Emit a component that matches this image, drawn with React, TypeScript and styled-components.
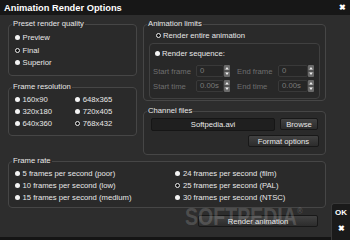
import React from 'react'
import styled, { createGlobalStyle } from 'styled-components'

const GlobalStyle = createGlobalStyle`
  html, body {
    margin: 0;
    padding: 0;
    background: #2d2d2d;
  }
  body {
    font-family: 'Liberation Sans', Arial, sans-serif;
  }
`

const Dialog = styled.div`
  background: #2d2d2d;
  color: #e8e8e8;
  display: flex;
  flex-direction: column;
  font-size: 7.7px;
  height: 240px;
  overflow: hidden;
  position: relative;
  width: 350px;
`

const TitleBar = styled.div`
  align-items: center;
  background: #171717;
  display: flex;
  flex: none;
  height: 15px;
  justify-content: space-between;
  padding: 0 4px;
`

const Title = styled.span`
  color: #fff;
  font-size: 9.3px;
  font-weight: bold;
`

const Close = styled.span`
  color: #fff;
  font-size: 8px;
  font-weight: bold;
`

const Main = styled.div`
  display: flex;
  flex: 1;
  min-height: 0;
`

const Content = styled.div`
  border-bottom: 3px solid #141414;
  display: flex;
  flex: 1;
  flex-direction: column;
  padding: 4px 5px 0 8px;
`

const TopRow = styled.div`
  display: flex;
  gap: 6px;
  height: 137px;
`

const Column = styled.div<{ $width: number; $gap: number }>`
  display: flex;
  flex-direction: column;
  gap: ${(p) => p.$gap}px;
  width: ${(p) => p.$width}px;
`

const Group = styled.fieldset<{ $height: number }>`
  background: #2a2a2a;
  border: 1px solid #464646;
  border-radius: 4px;
  box-sizing: border-box;
  height: ${(p) => p.$height}px;
  margin: 0;
  min-width: 0;
  padding: 0;
`

const Legend = styled.legend`
  color: #e8e8e8;
  line-height: 10px;
  margin-left: 3px;
  padding: 0 1px;
`

const GroupBody = styled.div<{ $pad: string }>`
  padding: ${(p) => p.$pad};
`

const RadioGrid = styled.div<{ $col: number; $row: number }>`
  display: grid;
  grid-auto-rows: ${(p) => p.$row}px;
  grid-template-columns: ${(p) => p.$col}px 1fr;
`

const RadioList = styled.div<{ $row: number }>`
  display: grid;
  grid-auto-rows: ${(p) => p.$row}px;
`

const Radio = styled.div<{ $indent?: number }>`
  align-items: center;
  display: flex;
  gap: 2.5px;
  padding-left: ${(p) => p.$indent ?? 0}px;
  white-space: nowrap;
`

const Dot = styled.span<{ $checked?: boolean }>`
  background: ${(p) => (p.$checked ? '#111' : '#f4f4f4')};
  border: ${(p) => (p.$checked ? '1.3px solid #eeeeee' : 'none')};
  border-radius: 50%;
  box-sizing: border-box;
  flex: none;
  height: 5px;
  width: 5px;
`

const SubPanel = styled.div`
  background: #282828;
  border: 1px solid #404040;
  border-radius: 4px;
  box-sizing: border-box;
  height: 56px;
  margin-top: 3px;
  padding: 4px 0 0 3px;
`

const SpinRows = styled.div`
  display: flex;
  flex-direction: column;
  gap: 3px;
  margin-top: 7px;
`

const SpinRow = styled.div`
  align-items: center;
  display: flex;
  height: 12px;
`

const SpinLabel = styled.span<{ $width: number }>`
  color: #6f6f6f;
  flex: none;
  width: ${(p) => p.$width}px;
`

const SpinInput = styled.div<{ $width: number }>`
  background: #262626;
  border: 1px solid #393939;
  border-radius: 2px;
  box-sizing: border-box;
  color: #7a7a7a;
  height: 12px;
  line-height: 10px;
  padding-left: 3px;
  width: ${(p) => p.$width}px;
`

const SpinGap = styled.span`
  flex: none;
  width: 7px;
`

const FileRow = styled.div`
  display: flex;
  gap: 5px;
`

const FileInput = styled.div`
  background: #1f1f1f;
  border: 1px solid #161616;
  border-radius: 2px;
  box-sizing: border-box;
  color: #ececec;
  height: 13px;
  line-height: 11px;
  text-align: center;
  width: 124px;
`

const Button = styled.div<{ $width: number }>`
  align-items: center;
  background: linear-gradient(#424242, #2c2c2c);
  border: 1px solid #181818;
  border-radius: 2px;
  box-sizing: border-box;
  color: #e8e8e8;
  display: flex;
  height: 12px;
  justify-content: center;
  width: ${(p) => p.$width}px;
`

const RightAligned = styled.div<{ $top: number; $right: number }>`
  display: flex;
  justify-content: flex-end;
  margin-top: ${(p) => p.$top}px;
  padding-right: ${(p) => p.$right}px;
`

const Side = styled.div`
  display: flex;
  flex: none;
  flex-direction: column;
  justify-content: flex-end;
  width: 19px;
`

const Strip = styled.div`
  align-items: center;
  background: #1a1a1a;
  border-left: 1px solid #383838;
  border-radius: 3px 0 0 0;
  border-top: 1px solid #383838;
  box-sizing: border-box;
  display: flex;
  flex-direction: column;
  gap: 6px;
  height: 37px;
  padding-top: 4px;
`

const StripItem = styled.span`
  color: #fff;
  font-size: 8px;
  font-weight: bold;
  line-height: 10px;
`

const Watermark = styled.div`
  color: rgba(255, 255, 255, 0.17);
  font-family: 'Liberation Sans', Arial, sans-serif;
  font-size: 23px;
  font-weight: bold;
  left: 185px;
  line-height: 23px;
  pointer-events: none;
  position: absolute;
  top: 200px;
  transform: scaleX(0.85);
  transform-origin: left top;
  white-space: nowrap;

  sup {
    font-size: 9px;
    vertical-align: 11px;
  }
`

const Spinner = () => (
  <svg width="6" height="12" viewBox="0 0 6 12" style={{ flex: 'none' }}>
    <rect x="0" y="0" width="6" height="12" rx="1" fill="#6a6a6a" />
    <line x1="0" y1="6" x2="6" y2="6" stroke="#3a3a3a" strokeWidth="1" />
    <path d="M1.2 4.4 L3 2 L4.8 4.4 Z" fill="#f0f0f0" />
    <path d="M1.2 7.6 L3 10 L4.8 7.6 Z" fill="#f0f0f0" />
  </svg>
)

const Spin = ({
  label,
  labelWidth,
  value,
  width,
}: {
  label: string
  labelWidth: number
  value: string
  width: number
}) => (
  <>
    <SpinLabel $width={labelWidth}>{label}</SpinLabel>
    <SpinInput $width={width}>{value}</SpinInput>
    <Spinner />
  </>
)

const Option = ({ label, checked, indent }: { label: string; checked?: boolean; indent?: number }) => (
  <Radio $indent={indent}>
    <Dot $checked={checked} />
    {label}
  </Radio>
)

const App = () => {
  return (
    <Dialog>
      <GlobalStyle />
      <TitleBar>
        <Title>Animation Render Options</Title>
        <Close>✖</Close>
      </TitleBar>
      <Main>
        <Content>
          <TopRow>
            <Column $width={129} $gap={6}>
              <Group $height={57}>
                <Legend>Preset render quality</Legend>
                <GroupBody $pad="2px 0 0 6px">
                  <RadioList $row={12.7}>
                    <Option label="Preview" />
                    <Option label="Final" checked />
                    <Option label="Superior" />
                  </RadioList>
                </GroupBody>
              </Group>
              <Group $height={54}>
                <Legend>Frame resolution</Legend>
                <GroupBody $pad="1px 0 0 6px">
                  <RadioGrid $col={60.3} $row={12.2}>
                    <Option label="160x90" />
                    <Option label="648x365" />
                    <Option label="320x180" />
                    <Option label="720x405" />
                    <Option label="640x360" />
                    <Option label="768x432" checked />
                  </RadioGrid>
                </GroupBody>
              </Group>
            </Column>
            <Column $width={183} $gap={5}>
              <Group $height={82}>
                <Legend>Animation limits</Legend>
                <GroupBody $pad="1px 5px 0 5px">
                  <RadioList $row={10}>
                    <Option label="Render entire animation" checked indent={6.5} />
                  </RadioList>
                  <SubPanel>
                    <RadioList $row={10}>
                      <Option label="Render sequence:" indent={1.5} />
                    </RadioList>
                    <SpinRows>
                      <SpinRow>
                        <Spin label="Start frame" labelWidth={43} value="0" width={28} />
                        <SpinGap />
                        <Spin label="End frame" labelWidth={41} value="0" width={30} />
                      </SpinRow>
                      <SpinRow>
                        <Spin label="Start time" labelWidth={43} value="0.00s" width={28} />
                        <SpinGap />
                        <Spin label="End time" labelWidth={41} value="0.00s" width={30} />
                      </SpinRow>
                    </SpinRows>
                  </SubPanel>
                </GroupBody>
              </Group>
              <Group $height={49}>
                <Legend>Channel files</Legend>
                <GroupBody $pad="2px 6px 0 7px">
                  <FileRow>
                    <FileInput>Softpedia.avi</FileInput>
                    <Button $width={38}>Browse</Button>
                  </FileRow>
                  <RightAligned $top={4} $right={0}>
                    <Button $width={71}>Format options</Button>
                  </RightAligned>
                </GroupBody>
              </Group>
            </Column>
          </TopRow>
          <Group $height={52}>
            <Legend>Frame rate</Legend>
            <GroupBody $pad="1px 0 0 6px">
              <RadioGrid $col={160.4} $row={12}>
                <Option label="5 frames per second (poor)" />
                <Option label="24 frames per second (film)" />
                <Option label="10 frames per second (low)" />
                <Option label="25 frames per second (PAL)" checked />
                <Option label="15 frames per second (medium)" />
                <Option label="30 frames per second (NTSC)" />
              </RadioGrid>
            </GroupBody>
          </Group>
          <RightAligned $top={7} $right={8}>
            <Button $width={120}>Render animation</Button>
          </RightAligned>
        </Content>
        <Side>
          <Strip>
            <StripItem>OK</StripItem>
            <StripItem>✖</StripItem>
          </Strip>
        </Side>
      </Main>
      <Watermark>
        SOFTPEDIA<sup>®</sup>
      </Watermark>
    </Dialog>
  )
}

export default App
